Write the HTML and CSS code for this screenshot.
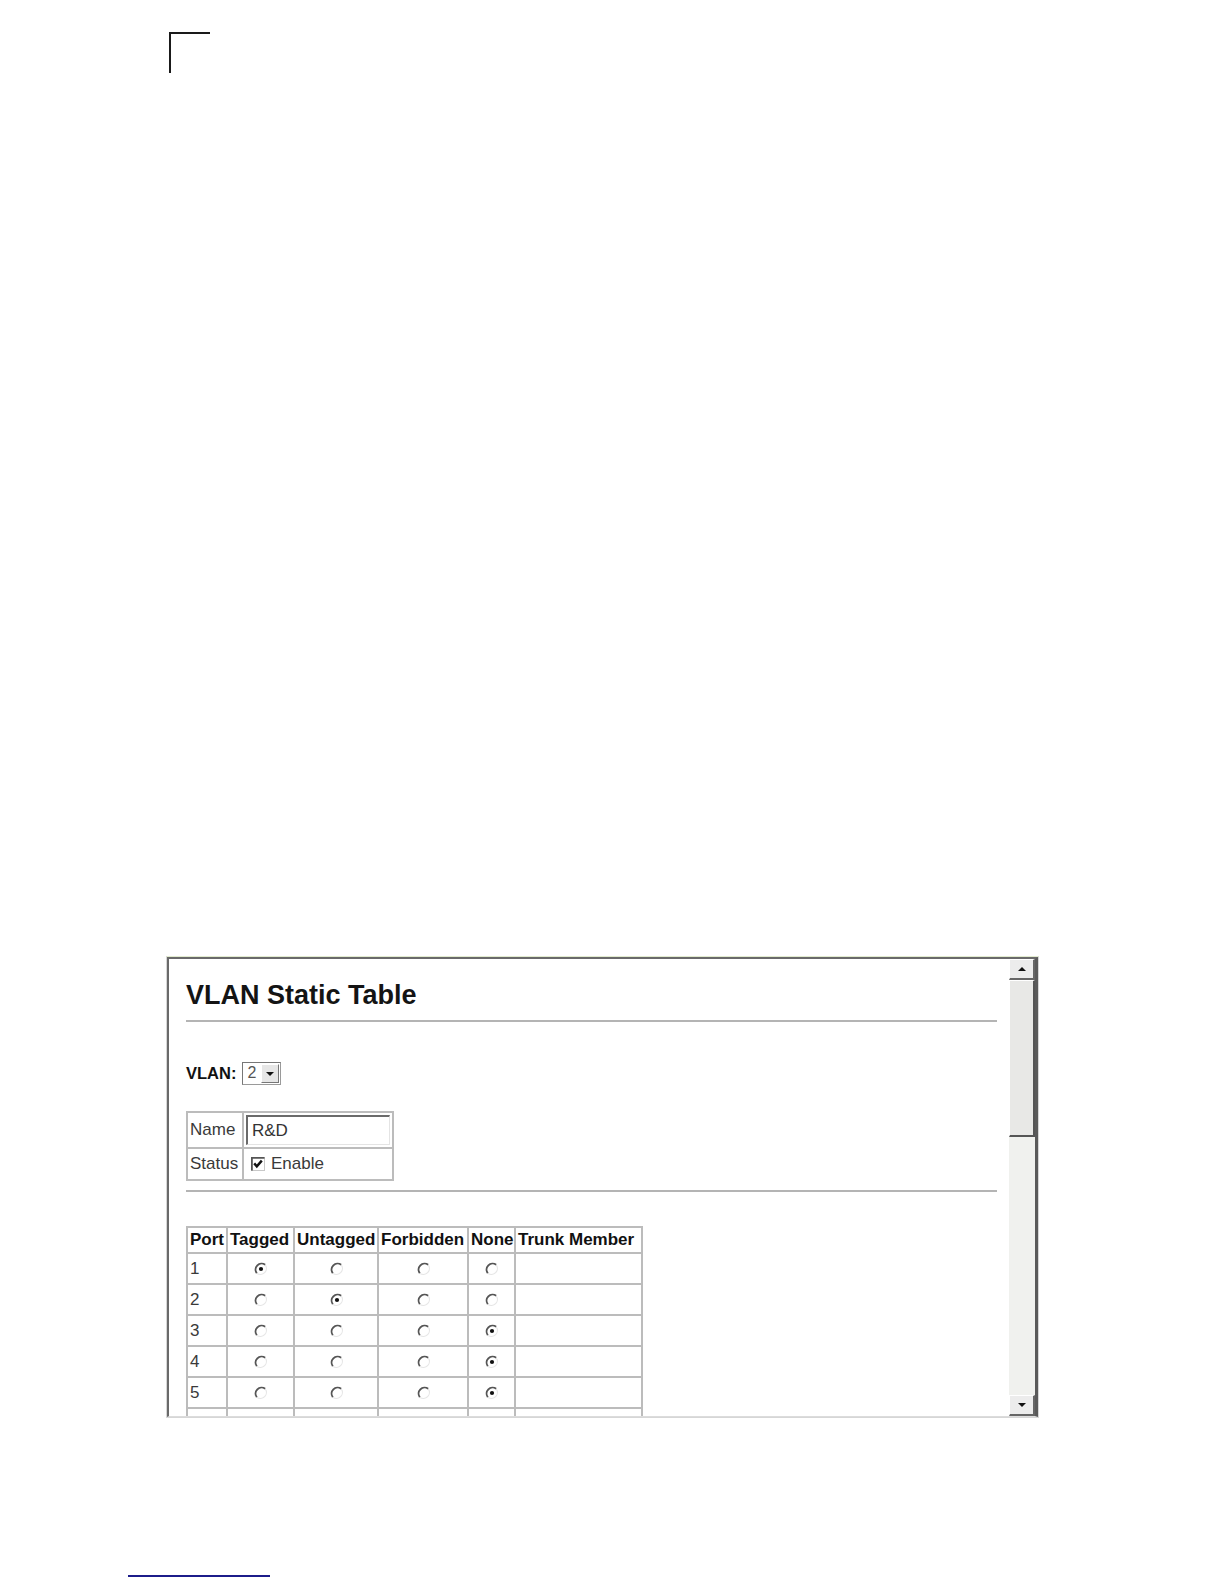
FILE: index.html
```html
<!DOCTYPE html>
<html>
<head>
<meta charset="utf-8">
<title>VLAN Static Table</title>
<link rel="stylesheet" href="styles.css">
</head>
<body>
<svg class="defs" width="0" height="0" aria-hidden="true">
  <symbol id="radio" viewBox="0 0 14 14">
    <circle cx="7" cy="7" r="6" fill="#fff"/>
    <path d="M11.2 2.8 A6 6 0 0 0 2.8 11.2" stroke="#555" stroke-width="1.9" fill="none"/>
    <path d="M2.8 11.2 A6 6 0 0 0 11.2 2.8" stroke="#e6e6e6" stroke-width="1.2" fill="none"/>
  </symbol>
  <symbol id="radio-on" viewBox="0 0 14 14">
    <circle cx="7" cy="7" r="6" fill="#fff"/>
    <path d="M11.2 2.8 A6 6 0 0 0 2.8 11.2" stroke="#555" stroke-width="1.9" fill="none"/>
    <path d="M2.8 11.2 A6 6 0 0 0 11.2 2.8" stroke="#e6e6e6" stroke-width="1.2" fill="none"/>
    <circle cx="7" cy="7" r="2.1" fill="#111"/>
  </symbol>
</svg>

<div class="crop-mark"></div>

<div class="frame">
  <div class="viewport">
    <div class="content">
      <h1 class="title">VLAN Static Table</h1>
      <div class="rule"></div>

      <div class="vlan-row">
        <span class="vlan-label">VLAN:</span>
        <span class="select">
          <span class="select-value">2</span>
          <span class="select-btn"><span class="tri-down"></span></span>
        </span>
      </div>

      <table class="info">
        <tr class="info-name">
          <td class="info-key">Name</td>
          <td class="info-val"><span class="textbox">R&amp;D</span></td>
        </tr>
        <tr class="info-status">
          <td class="info-key">Status</td>
          <td class="info-val">
            <span class="check-wrap">
              <svg class="checkbox" width="14" height="14" viewBox="0 0 14 14">
                <rect x="0.5" y="0.5" width="13" height="13" fill="#fff" stroke="#c8c8c8"/>
                <path d="M0.9 13.5 V0.9 H13.5" stroke="#555" stroke-width="1.8" fill="none"/>
                <path d="M3.2 6.4 L5.8 9.4 L10.8 3.6" stroke="#111" stroke-width="2.4" fill="none"/>
              </svg>
              Enable
            </span>
          </td>
        </tr>
      </table>

      <div class="rule rule-2"></div>

      <table class="ports">
        <colgroup>
          <col class="c-port"><col class="c-tag"><col class="c-untag"><col class="c-forb"><col class="c-none"><col class="c-trunk">
        </colgroup>
        <tr class="ports-head">
          <th>Port</th>
          <th>Tagged</th>
          <th>Untagged</th>
          <th>Forbidden</th>
          <th>None</th>
          <th>Trunk Member</th>
        </tr>
        <tr>
          <td class="num">1</td>
          <td class="rad"><svg width="14" height="14"><use href="#radio-on"/></svg></td>
          <td class="rad"><svg width="14" height="14"><use href="#radio"/></svg></td>
          <td class="rad"><svg width="14" height="14"><use href="#radio"/></svg></td>
          <td class="rad"><svg width="14" height="14"><use href="#radio"/></svg></td>
          <td></td>
        </tr>
        <tr>
          <td class="num">2</td>
          <td class="rad"><svg width="14" height="14"><use href="#radio"/></svg></td>
          <td class="rad"><svg width="14" height="14"><use href="#radio-on"/></svg></td>
          <td class="rad"><svg width="14" height="14"><use href="#radio"/></svg></td>
          <td class="rad"><svg width="14" height="14"><use href="#radio"/></svg></td>
          <td></td>
        </tr>
        <tr>
          <td class="num">3</td>
          <td class="rad"><svg width="14" height="14"><use href="#radio"/></svg></td>
          <td class="rad"><svg width="14" height="14"><use href="#radio"/></svg></td>
          <td class="rad"><svg width="14" height="14"><use href="#radio"/></svg></td>
          <td class="rad"><svg width="14" height="14"><use href="#radio-on"/></svg></td>
          <td></td>
        </tr>
        <tr>
          <td class="num">4</td>
          <td class="rad"><svg width="14" height="14"><use href="#radio"/></svg></td>
          <td class="rad"><svg width="14" height="14"><use href="#radio"/></svg></td>
          <td class="rad"><svg width="14" height="14"><use href="#radio"/></svg></td>
          <td class="rad"><svg width="14" height="14"><use href="#radio-on"/></svg></td>
          <td></td>
        </tr>
        <tr>
          <td class="num">5</td>
          <td class="rad"><svg width="14" height="14"><use href="#radio"/></svg></td>
          <td class="rad"><svg width="14" height="14"><use href="#radio"/></svg></td>
          <td class="rad"><svg width="14" height="14"><use href="#radio"/></svg></td>
          <td class="rad"><svg width="14" height="14"><use href="#radio-on"/></svg></td>
          <td></td>
        </tr>
        <tr>
          <td></td><td></td><td></td><td></td><td></td><td></td>
        </tr>
      </table>
    </div>

    <div class="scrollbar">
      <div class="sb-btn"><span class="tri-up"></span></div>
      <div class="sb-thumb"></div>
      <div class="sb-track"></div>
      <div class="sb-btn"><span class="tri-down"></span></div>
    </div>
  </div>
</div>

<div class="footer-line"></div>
</body>
</html>
```

FILE: styles.css
```css
* { box-sizing: border-box; }

html, body {
  margin: 0;
  padding: 0;
  background: #fff;
}

body {
  width: 1224px;
  height: 1584px;
  overflow: hidden;
  font-family: "Liberation Sans", Arial, sans-serif;
  color: #111;
}

.defs {
  position: absolute;
  width: 0;
  height: 0;
  overflow: hidden;
}

.crop-mark {
  margin: 32px 0 0 169px;
  width: 41px;
  height: 41px;
  border-top: 2px solid #1a1a1a;
  border-left: 2px solid #1a1a1a;
}

.frame {
  margin: 883px 0 0 166px;
  width: 873px;
  height: 462px;
  border: 1px solid #d6d6d6;
  border-top-color: #e2ebcf;
}

.viewport {
  display: flex;
  height: 100%;
  border-top: 2px solid #6a6a6a;
  border-left: 2px solid #6a6a6a;
  border-right: 3px solid #5a5a5a;
  border-bottom: 1px solid #dcdcdc;
}

.content {
  flex: 1;
  min-width: 0;
  overflow: hidden;
  padding: 21px 12px 0 17px;
  background: #fff;
}

.title {
  margin: 0;
  font-size: 27px;
  line-height: 31px;
  font-weight: bold;
  color: #141414;
}

.rule {
  margin-top: 9px;
  height: 2px;
  background: #b4b4b4;
}

.rule-2 {
  margin-top: 9px;
}

.vlan-row {
  display: flex;
  align-items: center;
  margin-top: 40px;
  height: 23px;
  gap: 6px;
}

.vlan-label {
  font-size: 16.5px;
  font-weight: bold;
  color: #111;
}

.select {
  display: flex;
  width: 39px;
  height: 23px;
  border: 1px solid #9a9a9a;
  border-top-color: #777;
  border-left-color: #777;
  background: #fff;
}

.select-value {
  flex: 1;
  padding-left: 4px;
  font-size: 16px;
  line-height: 20px;
  color: #555;
}

.select-btn {
  display: flex;
  align-items: center;
  justify-content: center;
  width: 18px;
  margin: 1px;
  background: #e6e6e6;
  border-right: 1px solid #777;
  border-bottom: 1px solid #777;
  border-top: 1px solid #fff;
  border-left: 1px solid #fff;
}

.tri-down {
  width: 0;
  height: 0;
  border-left: 4px solid transparent;
  border-right: 4px solid transparent;
  border-top: 4px solid #111;
}

.tri-up {
  width: 0;
  height: 0;
  border-left: 4px solid transparent;
  border-right: 4px solid transparent;
  border-bottom: 4px solid #111;
}

/* Name / Status table */
.info {
  margin-top: 26px;
  border-collapse: collapse;
  font-size: 17px;
  color: #3a3a3a;
}

.info td {
  border: 2px solid #bcbcbc;
  padding: 0 2px;
}

.info-key {
  width: 56px;
}

.info-val {
  width: 150px;
}

.info-name td {
  height: 36px;
}

.info-status td {
  height: 32px;
}

.textbox {
  display: block;
  height: 30px;
  padding-left: 4px;
  line-height: 28px;
  border-top: 2px solid #6a6a6a;
  border-left: 2px solid #6a6a6a;
  border-right: 1px solid #e4e4e4;
  border-bottom: 1px solid #e4e4e4;
  color: #333;
}

.check-wrap {
  display: flex;
  align-items: center;
  gap: 6px;
  padding-left: 5px;
}

/* Port table */
.ports {
  margin-top: 34px;
  width: 455px;
  table-layout: fixed;
  border-collapse: collapse;
  font-size: 17px;
}

.ports th,
.ports td {
  border: 2px solid #bcbcbc;
  padding: 0 1px 0 2px;
}

.ports th {
  height: 26px;
  font-size: 17px;
  font-weight: bold;
  color: #111;
  text-align: left;
  white-space: nowrap;
  overflow: hidden;
}

.ports td {
  height: 31px;
  color: #3a3a3a;
  vertical-align: middle;
}

.c-port { width: 40px; }
.c-tag { width: 67px; }
.c-untag { width: 84px; }
.c-forb { width: 90px; }
.c-none { width: 47px; }
.c-trunk { width: 127px; }

.ports .rad {
  text-align: center;
  line-height: 0;
}

/* Scrollbar */
.scrollbar {
  display: flex;
  flex-direction: column;
  width: 26px;
  background: #f0f1ee;
}

.sb-btn {
  display: flex;
  align-items: center;
  justify-content: center;
  height: 21px;
  background: #ececec;
  border-top: 1px solid #fff;
  border-left: 1px solid #fff;
  border-right: 2px solid #666;
  border-bottom: 2px solid #666;
}

.sb-thumb {
  height: 157px;
  background: #e8e8e6;
  border-top: 1px solid #fff;
  border-left: 1px solid #fff;
  border-right: 2px solid #555;
  border-bottom: 2px solid #555;
}

.sb-track {
  flex: 1;
}

.footer-line {
  margin: 157px 0 0 128px;
  width: 142px;
  height: 2px;
  background: #1c1c8a;
}
```
